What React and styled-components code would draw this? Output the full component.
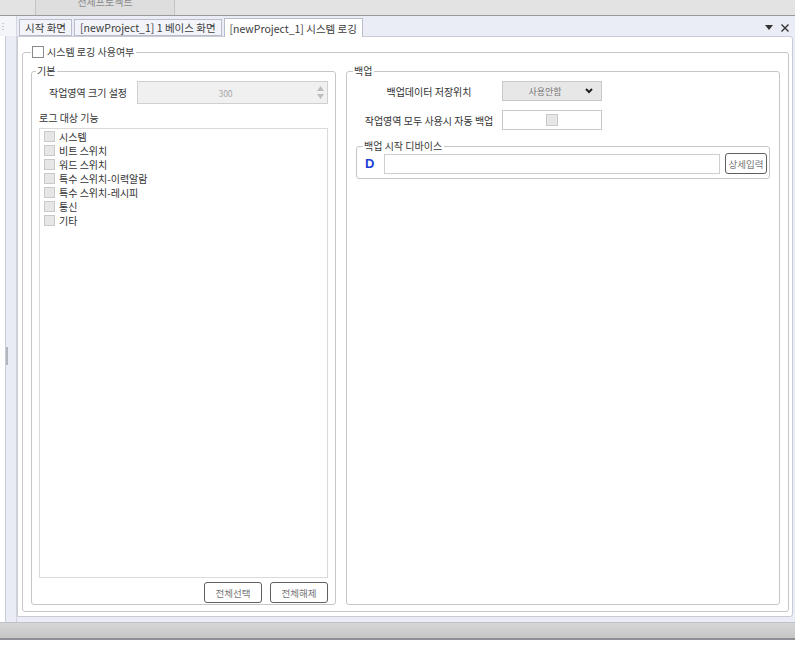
import React from 'react'
import styled, { createGlobalStyle } from 'styled-components'

const GlobalStyle = createGlobalStyle`
  html, body {
    margin: 0;
    padding: 0;
    background: #ffffff;
  }
  body {
    font-family: 'Noto Sans CJK KR', 'Noto Sans', sans-serif;
    font-size: 10px;
    color: #333;
  }
  * { box-sizing: border-box; }
`

const logTargets = [
  '시스템',
  '비트 스위치',
  '워드 스위치',
  '특수 스위치-이력알람',
  '특수 스위치-레시피',
  '통신',
  '기타',
]

const Window = styled.div`
  width: 795px;
  height: 640px;
  display: flex;
  flex-direction: column;
`

const TopStrip = styled.div`
  height: 16px;
  flex: 0 0 16px;
  background: #e3e3e3;
  border-bottom: 1px solid #9a9a9a;
  display: flex;
  padding-left: 35px;
  overflow: hidden;
`

const ProjectTab = styled.div`
  width: 140px;
  border-left: 1px solid #c4c4c4;
  border-right: 1px solid #c4c4c4;
  background: #dedede;
  color: #8a8a8a;
  text-align: center;
  line-height: 12px;
  margin-top: -4px;
`

const Middle = styled.div`
  flex: 1;
  display: flex;
  min-height: 0;
`

const LeftDock = styled.div`
  width: 17px;
  display: flex;
  flex-direction: column;
`

const DockGrip = styled.div`
  height: 20px;
  display: flex;
  align-items: center;
  padding-left: 2px;
  color: #999;
  font-size: 8px;
  background: #f4f5f8;
  border-right: 1px solid #d6d8e0;
`

const DockStrip = styled.div`
  flex: 1;
  margin-left: 5px;
  border-left: 1px solid #c8cad4;
  border-right: 1px solid #d2d4dc;
  background: #e9ecf4;
  display: flex;
  justify-content: flex-start;
  padding-top: 311px;
`

const DockThumb = styled.div`
  width: 2px;
  height: 18px;
  background: #b4b6be;
`

const DocPane = styled.div`
  flex: 1;
  display: flex;
  flex-direction: column;
  background: #eaedf5;
  min-width: 0;
`

const TabBar = styled.div`
  height: 20px;
  flex: 0 0 20px;
  display: flex;
  align-items: flex-end;
  padding-left: 2px;
  padding-right: 6px;
  gap: 2px;
`

const Tab = styled.div`
  height: ${p => (p.$active ? '19px' : '17px')};
  padding: 0 5px;
  display: flex;
  align-items: center;
  background: ${p => (p.$active ? '#ffffff' : '#f2f4f9')};
  border: 1px solid #b9bdc9;
  border-bottom: ${p => (p.$active ? 'none' : '1px solid #b9bdc9')};
  color: #3c3c3c;
  font-size: 10.5px;
  white-space: nowrap;
  margin-bottom: ${p => (p.$active ? '-1px' : '0')};
  position: relative;
  z-index: ${p => (p.$active ? 2 : 1)};
`

const TabTools = styled.div`
  margin-left: auto;
  align-self: center;
  display: flex;
  align-items: center;
  gap: 8px;
  margin-top: 3px;
`

const ContentPanel = styled.div`
  flex: 1;
  margin: 0 2px 5px 0;
  background: #ffffff;
  border: 1px solid #c9ccd4;
  border-radius: 0 3px 3px 0;
  padding: 8px 3px 4px 4px;
  display: flex;
  min-height: 0;
`

const GroupBox = styled.fieldset`
  margin: 0;
  min-width: 0;
  border: 1px solid #c6c6c6;
  border-radius: 3px;
  display: flex;
  flex-direction: column;
`

const OuterGroup = styled(GroupBox)`
  flex: 1;
  padding: 5px 8px 6px 8px;
`

const Legend = styled.legend`
  padding: 0 2px 0 1px;
  margin-left: ${p => p.$offset || '-3px'};
  line-height: 14px;
  color: #3a3a3a;
  display: flex;
  align-items: center;
  gap: 3px;
`

const Columns = styled.div`
  flex: 1;
  display: flex;
  gap: 10px;
  min-height: 0;
`

const BasicGroup = styled(GroupBox)`
  width: 305px;
  flex: 0 0 305px;
  padding: 0 7px 1px 7px;
`

const BackupGroup = styled(GroupBox)`
  flex: 1;
  padding: 0 9px 1px 9px;
`

const Check = styled.span`
  display: inline-block;
  width: ${p => p.$size || 11}px;
  height: ${p => p.$size || 11}px;
  border: 1px solid ${p => (p.$light ? '#c9c9c9' : '#8a8a8a')};
  background: ${p => (p.$light ? '#e6e6e6' : '#ffffff')};
  flex: 0 0 auto;
`

const FieldRow = styled.div`
  display: flex;
  align-items: center;
  height: ${p => p.$h || 20}px;
  margin-top: ${p => p.$mt || 0}px;
`

const FieldLabel = styled.div`
  width: ${p => p.$w}px;
  flex: 0 0 ${p => p.$w}px;
  text-align: center;
  color: #333;
  white-space: nowrap;
`

const Spinner = styled.div`
  flex: 1;
  height: 100%;
  display: flex;
  background: #f0f0f0;
  border: 1px solid #d0d0d0;
`

const SpinValue = styled.div`
  flex: 1;
  display: flex;
  align-items: center;
  justify-content: center;
  color: #a8a8a8;
  font-size: 8.5px;
`

const SpinArrows = styled.div`
  width: 14px;
  display: flex;
  flex-direction: column;
  align-items: center;
  justify-content: space-around;
  padding: 2px 0;
`

const SectionTitle = styled.div`
  margin-top: 6px;
  line-height: 16px;
  color: #333;
`

const ListBox = styled.div`
  flex: 1;
  margin-top: 2px;
  border: 1px solid #dadada;
  padding: 0 4px;
  display: flex;
  flex-direction: column;
`

const ListItem = styled.div`
  height: 14px;
  display: flex;
  align-items: center;
  gap: 4px;
  color: #333;
`

const ButtonRow = styled.div`
  display: flex;
  justify-content: flex-end;
  gap: 8px;
  margin-top: 4px;
`

const PushButton = styled.div`
  width: ${p => p.$w || 58}px;
  height: 21px;
  border: 1px solid #606060;
  border-radius: 3px;
  background: #ffffff;
  color: #777;
  font-size: 9.5px;
  display: flex;
  align-items: center;
  justify-content: center;
  white-space: nowrap;
`

const Dropdown = styled.div`
  width: 100px;
  height: 100%;
  background: #e7e7e7;
  border: 1px solid #c9c9c9;
  display: flex;
  align-items: center;
  padding: 0 8px 0 8px;
`

const DropText = styled.div`
  flex: 1;
  text-align: center;
  color: #777;
  font-size: 9px;
  padding-right: 6px;
`

const CheckCell = styled.div`
  width: 100px;
  height: 100%;
  border: 1px solid #c9c9c9;
  background: #ffffff;
  display: flex;
  align-items: center;
  justify-content: center;
`

const DeviceGroup = styled(GroupBox)`
  margin-top: 9px;
  padding: 0 2px 4px 8px;
`

const DeviceRow = styled.div`
  display: flex;
  align-items: center;
  gap: 5px;
`

const DeviceLetter = styled.div`
  width: 14px;
  color: #1b3fd6;
  font-family: 'Liberation Sans', Arial, sans-serif;
  font-weight: 700;
  font-size: 13px;
`

const TextInput = styled.div`
  flex: 1;
  height: 20px;
  border: 1px solid #cfcfcf;
  background: #ffffff;
`

const StatusBar = styled.div`
  height: 18px;
  flex: 0 0 18px;
  background: linear-gradient(#d6d6d6, #c6c6c6);
  border-top: 1px solid #c0c0c8;
  border-bottom: 2px solid #8e8e96;
`

const TriangleDown = () => (
  <svg width="8" height="5" viewBox="0 0 8 5">
    <polygon points="0,0 8,0 4,5" fill="#333" />
  </svg>
)

const CloseX = () => (
  <svg width="8" height="8" viewBox="0 0 8 8">
    <path d="M0.5 0.5 L7.5 7.5 M7.5 0.5 L0.5 7.5" stroke="#333" strokeWidth="1.4" />
  </svg>
)

const Chevron = () => (
  <svg width="8" height="6" viewBox="0 0 8 6">
    <polyline points="1,1 4,4 7,1" fill="none" stroke="#222" strokeWidth="2" />
  </svg>
)

const SmallArrow = ({ up }) => (
  <svg width="7" height="5" viewBox="0 0 7 5">
    <polygon points={up ? '0,5 7,5 3.5,0' : '0,0 7,0 3.5,5'} fill="#bdbdbd" />
  </svg>
)

const App = () => (
  <>
    <GlobalStyle />
    <Window>
      <TopStrip>
        <ProjectTab>전체프로젝트</ProjectTab>
      </TopStrip>
      <Middle>
        <LeftDock>
          <DockGrip>⁝</DockGrip>
          <DockStrip>
            <DockThumb />
          </DockStrip>
        </LeftDock>
        <DocPane>
          <TabBar>
            <Tab>시작 화면</Tab>
            <Tab>[newProject_1] 1 베이스 화면</Tab>
            <Tab $active>[newProject_1] 시스템 로깅</Tab>
            <TabTools>
              <TriangleDown />
              <CloseX />
            </TabTools>
          </TabBar>
          <ContentPanel>
            <OuterGroup>
              <Legend $offset="0px">
                <Check $size={12} />
                시스템 로깅 사용여부
              </Legend>
              <Columns>
                <BasicGroup>
                  <Legend>기본</Legend>
                  <FieldRow $h={23} $mt={3}>
                    <FieldLabel $w={98}>작업영역 크기 설정</FieldLabel>
                    <Spinner>
                      <SpinValue>300</SpinValue>
                      <SpinArrows>
                        <SmallArrow up />
                        <SmallArrow />
                      </SpinArrows>
                    </Spinner>
                  </FieldRow>
                  <SectionTitle>로그 대상 기능</SectionTitle>
                  <ListBox>
                    {logTargets.map(name => (
                      <ListItem key={name}>
                        <Check $light />
                        {name}
                      </ListItem>
                    ))}
                  </ListBox>
                  <ButtonRow>
                    <PushButton>전체선택</PushButton>
                    <PushButton>전체해제</PushButton>
                  </ButtonRow>
                </BasicGroup>
                <BackupGroup>
                  <Legend>백업</Legend>
                  <FieldRow $mt={3}>
                    <FieldLabel $w={146}>백업데이터 저장위치</FieldLabel>
                    <Dropdown>
                      <DropText>사용안함</DropText>
                      <Chevron />
                    </Dropdown>
                  </FieldRow>
                  <FieldRow $mt={9}>
                    <FieldLabel $w={146}>작업영역 모두 사용시 자동 백업</FieldLabel>
                    <CheckCell>
                      <Check $light $size={12} />
                    </CheckCell>
                  </FieldRow>
                  <DeviceGroup>
                    <Legend $offset="-2px">백업 시작 디바이스</Legend>
                    <DeviceRow>
                      <DeviceLetter>D</DeviceLetter>
                      <TextInput />
                      <PushButton $w={42}>상세입력</PushButton>
                    </DeviceRow>
                  </DeviceGroup>
                </BackupGroup>
              </Columns>
            </OuterGroup>
          </ContentPanel>
        </DocPane>
      </Middle>
      <StatusBar />
    </Window>
  </>
)

export default App
